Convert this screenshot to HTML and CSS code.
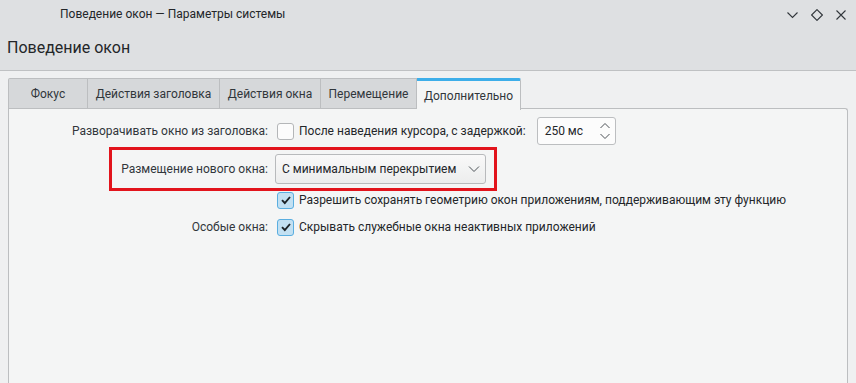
FILE: index.html
```html
<!DOCTYPE html>
<html lang="ru">
<head>
    <meta charset="UTF-8">
    <title>Поведение окон — Параметры системы</title>
    <link rel="stylesheet" href="styles.css">
</head>
<body>

<div class="window">
    <div class="titlebar">
        <span class="title">Поведение окон — Параметры системы</span>
        <div class="win-buttons">
            <svg class="win-btn" width="12" height="12" viewBox="0 0 12 12"><path d="M0.5 3.5 L5.5 8.5 L10.5 3.5" fill="none" stroke="#31363b" stroke-width="1.1"/></svg>
            <svg class="win-btn" width="12" height="12" viewBox="0 0 12 12"><path d="M6 0.6 L11.4 6 L6 11.4 L0.6 6 Z" fill="none" stroke="#31363b" stroke-width="1.1"/></svg>
            <svg class="win-btn" width="12" height="12" viewBox="0 0 12 12"><path d="M1.5 1.5 L10.5 10.5 M10.5 1.5 L1.5 10.5" fill="none" stroke="#31363b" stroke-width="1.1"/></svg>
        </div>
    </div>

    <header class="page-header">
        <h1>Поведение окон</h1>
    </header>

    <section class="content">
        <nav class="tabs">
            <span class="tab tab-focus">Фокус</span>
            <span class="tab tab-titlebar">Действия заголовка</span>
            <span class="tab tab-window">Действия окна</span>
            <span class="tab tab-move">Перемещение</span>
            <span class="tab tab-extra active">Дополнительно</span>
        </nav>

        <div class="panel">
            <div class="form-row row-shade">
                <span class="label">Разворачивать окно из заголовка:</span>
                <div class="field">
                    <span class="checkbox"></span>
                    <span class="text">После наведения курсора, с задержкой:</span>
                    <div class="spinbox">
                        <span>250 мс</span>
                        <svg class="spin-arrows" width="12" height="20" viewBox="0 0 12 20">
                            <path d="M1.5 7 L6 2.5 L10.5 7" fill="none" stroke="#4d5257" stroke-width="1"/>
                            <path d="M1.5 13 L6 17.5 L10.5 13" fill="none" stroke="#4d5257" stroke-width="1"/>
                        </svg>
                    </div>
                </div>
            </div>

            <div class="form-row row-placement">
                <div class="highlight"></div>
                <span class="label">Размещение нового окна:</span>
                <div class="field">
                    <div class="combo">
                        <span>С минимальным перекрытием</span>
                        <svg width="12" height="8" viewBox="0 0 12 8"><path d="M1 1.5 L6 6.5 L11 1.5" fill="none" stroke="#4d5257" stroke-width="1"/></svg>
                    </div>
                </div>
            </div>

            <div class="form-row row-geometry">
                <span class="label"></span>
                <div class="field">
                    <span class="checkbox checked">
                        <svg width="12" height="12" viewBox="0 0 12 12"><path d="M2 6.2 L4.8 9 L10 3" fill="none" stroke="#1d2327" stroke-width="1.9"/></svg>
                    </span>
                    <span class="text">Разрешить сохранять геометрию окон приложениям, поддерживающим эту функцию</span>
                </div>
            </div>

            <div class="form-row row-special">
                <span class="label">Особые окна:</span>
                <div class="field">
                    <span class="checkbox checked">
                        <svg width="12" height="12" viewBox="0 0 12 12"><path d="M2 6.2 L4.8 9 L10 3" fill="none" stroke="#1d2327" stroke-width="1.9"/></svg>
                    </span>
                    <span class="text">Скрывать служебные окна неактивных приложений</span>
                </div>
            </div>
        </div>
    </section>
</div>

</body>
</html>
```

FILE: styles.css
```css
body {
    margin: 0;
    font-family: Roboto, "Noto Sans", sans-serif;
    font-size: 12px;
    color: #232629;
    background-color: #eff0f1;
}

.window {
    width: 856px;
    height: 383px;
    overflow: hidden;
    display: flex;
    flex-direction: column;
}

.titlebar {
    height: 30px;
    display: flex;
    align-items: center;
    justify-content: space-between;
    background-color: #dee0e2;
    padding: 0 9px 0 60px;
}

.titlebar .title {
    font-size: 12px;
    margin-top: -2px;
}

.win-buttons {
    display: flex;
    gap: 12px;
    margin-top: 0;
}

.page-header {
    height: 40px;
    background-color: #dee0e2;
    border-bottom: 1px solid #bfc1c3;
    display: flex;
    align-items: center;
    padding-left: 7px;
}

.page-header h1 {
    margin: 0;
    font-size: 16px;
    font-weight: 400;
    margin-top: -6px;
}

.content {
    flex: 1;
    padding: 7px 8px 0 8px;
    display: flex;
    flex-direction: column;
}

.tabs {
    display: flex;
    height: 30px;
    position: relative;
    z-index: 1;
}

.tab {
    display: flex;
    align-items: center;
    justify-content: center;
    white-space: nowrap;
    background-color: #d6d8da;
    border: 1px solid #bcbec0;
    border-left: none;
    border-bottom: none;
    color: #31363b;
}

.tab:first-child {
    border-left: 1px solid #bcbec0;
    border-top-left-radius: 2px;
}

.tab-focus { width: 78px; }
.tab-titlebar { width: 131px; }
.tab-window { width: 100px; }
.tab-move { width: 95px; }
.tab-extra { width: 104px; }

.tab.active {
    background-color: #f4f5f5;
    border-top: 3px solid #3daee9;
    border-top-right-radius: 2px;
    height: 32px;
    box-sizing: border-box;
    padding-top: 1px;
}

.panel {
    flex: 1;
    background-color: #f4f5f5;
    border: 1px solid #bcbec0;
    border-bottom: none;
    border-top-right-radius: 3px;
    padding-top: 8px;
    display: flex;
    flex-direction: column;
}

.form-row {
    display: flex;
    align-items: center;
    position: relative;
    white-space: nowrap;
}

.form-row .label {
    width: 259px;
    text-align: right;
    padding-right: 9px;
    color: #31363b;
}

.field {
    display: flex;
    align-items: center;
}

.row-shade { height: 28px; }
.row-placement { height: 30px; margin-top: 9px; }
.row-geometry { height: 20px; margin-top: 6px; }
.row-special { height: 20px; margin-top: 7px; }

.checkbox {
    width: 15px;
    height: 15px;
    border: 1px solid #b4b6b8;
    border-radius: 3px;
    background-color: #fcfcfc;
    margin-right: 5px;
    display: flex;
    align-items: center;
    justify-content: center;
}

.checkbox.checked {
    background-color: #c2e0f2;
    border-color: #5aaee0;
}

.spinbox {
    width: 79px;
    height: 28px;
    box-sizing: border-box;
    margin-left: 11px;
    background-color: #fcfcfc;
    border: 1px solid #bcbec0;
    border-radius: 3px;
    display: flex;
    align-items: center;
    justify-content: space-between;
    padding: 0 4px 0 7px;
}

.combo {
    width: 211px;
    height: 30px;
    box-sizing: border-box;
    margin-left: -2px;
    background: linear-gradient(#f9f9f9, #eceded);
    border: 1px solid #b8babc;
    border-radius: 3px;
    display: flex;
    align-items: center;
    justify-content: space-between;
    padding: 0 5px 0 6px;
}

.highlight {
    position: absolute;
    left: 100px;
    top: -7px;
    width: 382px;
    height: 38px;
    border: 3px solid #e2141c;
    pointer-events: none;
}
```
